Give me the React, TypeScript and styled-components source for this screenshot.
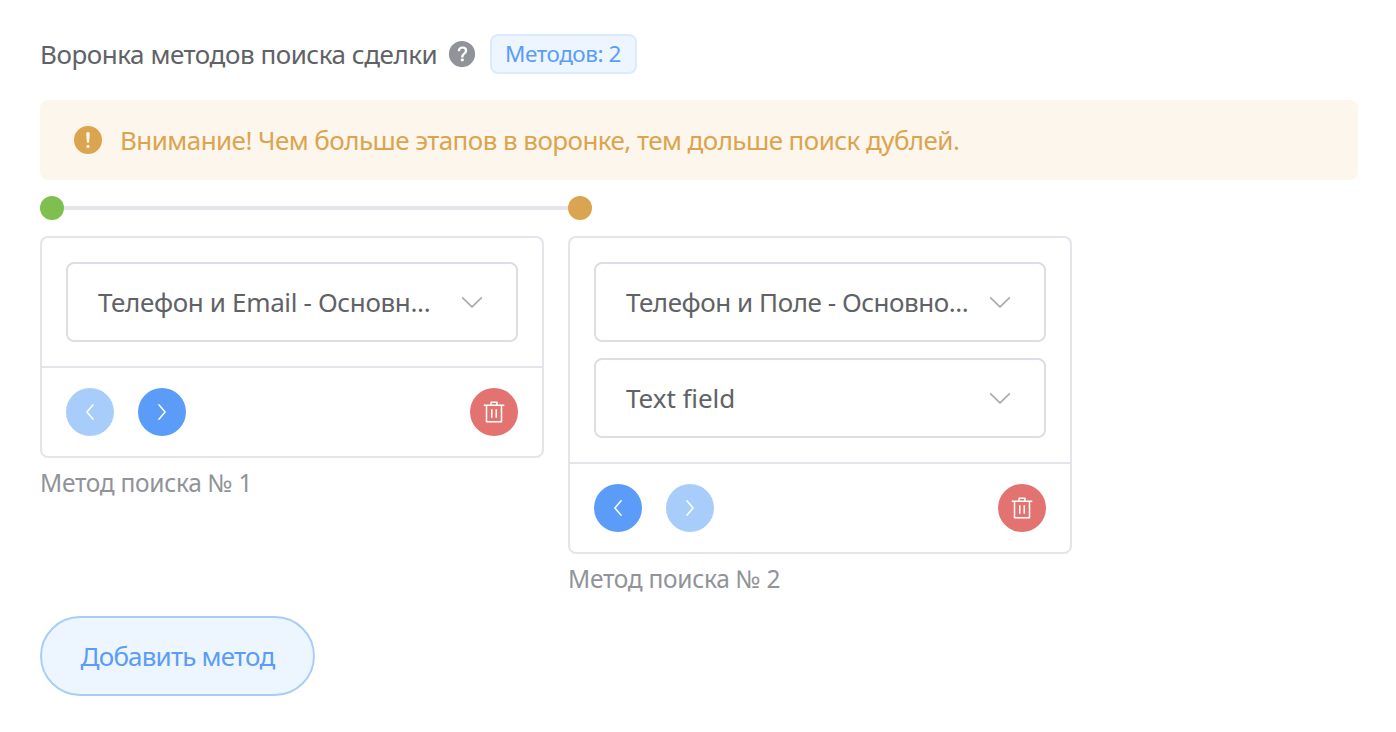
import React from "react";
import styled, { createGlobalStyle } from "styled-components";

const GlobalStyle = createGlobalStyle`
  *, *::before, *::after { box-sizing: border-box; }
  body {
    margin: 0;
    background: #ffffff;
    color: #606266;
    font-family: "Noto Sans", "Open Sans", sans-serif;
  }
  button { font-family: inherit; }
`;

const icons = {
  question:
    "M512 64a448 448 0 1 1 0 896 448 448 0 0 1 0-896zm23.744 191.488c-52.096 0-92.928 14.784-123.2 44.352-30.976 29.568-45.76 70.4-45.76 122.496h80.256c0-29.568 5.632-52.8 17.6-68.992 13.376-19.712 35.2-28.864 66.176-28.864 23.936 0 42.944 6.336 56.32 19.712 12.672 13.376 19.712 31.68 19.712 54.912 0 17.6-6.336 34.496-19.008 49.984l-8.448 9.856c-45.76 40.832-73.216 70.4-82.368 89.408-9.856 19.008-14.08 42.24-14.08 68.992v9.856h80.96v-9.856c0-16.896 3.52-31.68 10.56-45.76 6.336-12.672 15.488-24.64 28.16-35.2 33.792-29.568 54.208-48.576 60.544-55.616 16.896-22.528 26.048-51.392 26.048-86.592 0-42.944-14.08-76.736-42.24-101.376-28.16-25.344-65.472-37.312-111.232-37.312zm-12.672 406.208a54.272 54.272 0 0 0-38.72 14.784 49.408 49.408 0 0 0-15.488 38.016c0 15.488 4.928 28.16 15.488 38.016A54.848 54.848 0 0 0 523.072 768c15.488 0 28.16-4.928 38.72-14.784a51.52 51.52 0 0 0 16.192-38.72 51.968 51.968 0 0 0-15.488-38.016 55.936 55.936 0 0 0-39.424-14.784z",
  warning:
    "M512 64a448 448 0 1 1 0 896 448 448 0 0 1 0-896zm0 192a58.432 58.432 0 0 0-58.24 63.744l23.36 256.384a35.072 35.072 0 0 0 69.76 0l23.296-256.384A58.432 58.432 0 0 0 512 256zm0 512a51.2 51.2 0 1 0 0-102.4 51.2 51.2 0 0 0 0 102.4z",
  down:
    "M831.872 340.864 512 652.672 192.128 340.864a30.592 30.592 0 0 0-42.752 0 29.12 29.12 0 0 0 0 41.6L489.664 714.24a32 32 0 0 0 44.672 0l340.288-331.712a29.12 29.12 0 0 0 0-41.728 30.592 30.592 0 0 0-42.752 0z",
  trash:
    "M160 256H96a32 32 0 0 1 0-64h256V95.936a32 32 0 0 1 32-32h256a32 32 0 0 1 32 32V192h256a32 32 0 1 1 0 64h-64v672a32 32 0 0 1-32 32H192a32 32 0 0 1-32-32V256zm448-64v-64H416v64h192zM224 896h576V256H224v640zm192-128a32 32 0 0 1-32-32V416a32 32 0 0 1 64 0v320a32 32 0 0 1-32 32zm192 0a32 32 0 0 1-32-32V416a32 32 0 0 1 64 0v320a32 32 0 0 1-32 32z",
};

const Svg = styled.svg<{ $size: number }>`
  display: block;
  flex: none;
  width: ${(p) => p.$size}px;
  height: ${(p) => p.$size}px;
  fill: currentColor;
`;

const ArrowSvg = styled.svg`
  display: block;
  width: 24px;
  height: 24px;
  fill: none;
  stroke: currentColor;
  stroke-width: 1.5;
  stroke-linecap: round;
  stroke-linejoin: round;
`;

function Icon({ name, size }: { name: keyof typeof icons; size: number }) {
  return (
    <Svg viewBox="0 0 1024 1024" $size={size} aria-hidden="true">
      <path d={icons[name]} />
    </Svg>
  );
}

function Arrow({ to }: { to: "left" | "right" }) {
  return (
    <ArrowSvg viewBox="0 0 24 24" aria-hidden="true">
      <path d={to === "left" ? "M15.1 4.7 8.9 12l6.2 7.3" : "m8.9 4.7 6.2 7.3-6.2 7.3"} />
    </ArrowSvg>
  );
}

const Page = styled.main`
  width: 1396px;
  height: 732px;
  padding: 34px 38px 0 40px;
`;

const Header = styled.header`
  display: flex;
  align-items: center;
  height: 40px;
`;

const Title = styled.h1`
  width: 407px;
  margin: 0;
  font-size: 26px;
  font-weight: 400;
  line-height: 40px;
  letter-spacing: -0.46px;
  white-space: nowrap;
`;

const Help = styled.span`
  color: #909399;
`;

const Tag = styled.span`
  width: 147px;
  height: 40px;
  margin-left: 13px;
  padding-left: 13px;
  border: 2px solid #dceafe;
  border-radius: 8px;
  background: #edf5ff;
  color: #5b9cf8;
  font-size: 22.5px;
  line-height: 35px;
  letter-spacing: -0.45px;
  white-space: nowrap;
`;

const Alert = styled.div`
  display: flex;
  align-items: center;
  gap: 16px;
  height: 80px;
  margin-top: 26px;
  padding: 0 32px;
  border-radius: 8px;
  background: #fdf6ec;
  color: #dba450;
`;

const AlertText = styled.span`
  padding-bottom: 1px;
  font-size: 26px;
  letter-spacing: -0.56px;
  white-space: nowrap;
`;

const Steps = styled.div`
  display: flex;
  align-items: flex-start;
  gap: 24px;
  margin-top: 16px;
`;

const Step = styled.section`
  width: 504px;
`;

const Track = styled.div`
  display: flex;
  align-items: center;
  width: 528px;
  height: 24px;
`;

const Dot = styled.i<{ $color: string }>`
  width: 24px;
  height: 24px;
  border-radius: 50%;
  background: ${(p) => p.$color};
`;

const Line = styled.i`
  flex: 1;
  height: 4px;
  background: #e4e5eb;
`;

const Card = styled.div`
  margin-top: 16px;
  border: 2px solid #e4e5eb;
  border-radius: 8px;
`;

const Fields = styled.div`
  display: flex;
  flex-direction: column;
  gap: 16px;
  padding: 24px;
`;

const Select = styled.div`
  display: flex;
  align-items: center;
  justify-content: space-between;
  height: 80px;
  padding: 0 30px;
  border: 2px solid #dcdee5;
  border-radius: 8px;
  color: #a8abb2;
`;

const SelectText = styled.span<{ $spacing: number }>`
  padding-bottom: 1px;
  color: #606266;
  font-size: 26px;
  letter-spacing: ${(p) => p.$spacing}px;
  white-space: nowrap;
`;

const Actions = styled.div`
  display: flex;
  align-items: center;
  gap: 24px;
  height: 90px;
  padding: 0 24px;
  border-top: 2px solid #e4e5eb;
`;

const RoundButton = styled.button<{ $tone: "primary" | "danger" }>`
  display: flex;
  align-items: center;
  justify-content: center;
  width: 48px;
  height: 48px;
  padding: 0;
  border: 0;
  border-radius: 50%;
  background: ${(p) => (p.$tone === "danger" ? "#e37371" : "#5b9cf8")};
  color: #ffffff;

  &:disabled { background: #a9cdfb; }
  &:last-child { margin-left: auto; }
`;

const Caption = styled.p`
  margin: 7px 0 0;
  color: #909399;
  font-size: 24.5px;
  line-height: 36px;
  letter-spacing: -0.29px;
  white-space: nowrap;
`;

const AddButton = styled.button`
  display: block;
  width: 275px;
  height: 80px;
  margin-top: 19px;
  padding: 0;
  border: 2px solid #a9cdfb;
  border-radius: 40px;
  background: #edf5ff;
  color: #5b9cf8;
  font-size: 26px;
  letter-spacing: -0.8px;
  white-space: nowrap;
`;

interface Field {
  label: string;
  spacing: number;
}

const methods: { color: string; fields: Field[] }[] = [
  { color: "#7fbf4f", fields: [{ label: "Телефон и Email - Основн...", spacing: -0.35 }] },
  {
    color: "#dba450",
    fields: [
      { label: "Телефон и Поле - Основно...", spacing: -0.45 },
      { label: "Text field", spacing: -0.05 },
    ],
  },
];

export default function App() {
  return (
    <>
      <GlobalStyle />
      <Page>
        <Header>
          <Title>Воронка методов поиска сделки</Title>
          <Help>
            <Icon name="question" size={30} />
          </Help>
          <Tag>Методов: {methods.length}</Tag>
        </Header>
        <Alert role="alert">
          <Icon name="warning" size={32} />
          <AlertText>Внимание! Чем больше этапов в воронке, тем дольше поиск дублей.</AlertText>
        </Alert>
        <Steps>
          {methods.map((method, index) => {
            const last = index === methods.length - 1;
            return (
              <Step key={index}>
                <Track>
                  <Dot $color={method.color} />
                  {!last && <Line />}
                </Track>
                <Card>
                  <Fields>
                    {method.fields.map((field) => (
                      <Select key={field.label}>
                        <SelectText $spacing={field.spacing}>{field.label}</SelectText>
                        <Icon name="down" size={28} />
                      </Select>
                    ))}
                  </Fields>
                  <Actions>
                    <RoundButton $tone="primary" disabled={index === 0} aria-label="Влево">
                      <Arrow to="left" />
                    </RoundButton>
                    <RoundButton $tone="primary" disabled={last} aria-label="Вправо">
                      <Arrow to="right" />
                    </RoundButton>
                    <RoundButton $tone="danger" aria-label="Удалить">
                      <Icon name="trash" size={24} />
                    </RoundButton>
                  </Actions>
                </Card>
                <Caption>Метод поиска № {index + 1}</Caption>
              </Step>
            );
          })}
        </Steps>
        <AddButton>Добавить метод</AddButton>
      </Page>
    </>
  );
}
